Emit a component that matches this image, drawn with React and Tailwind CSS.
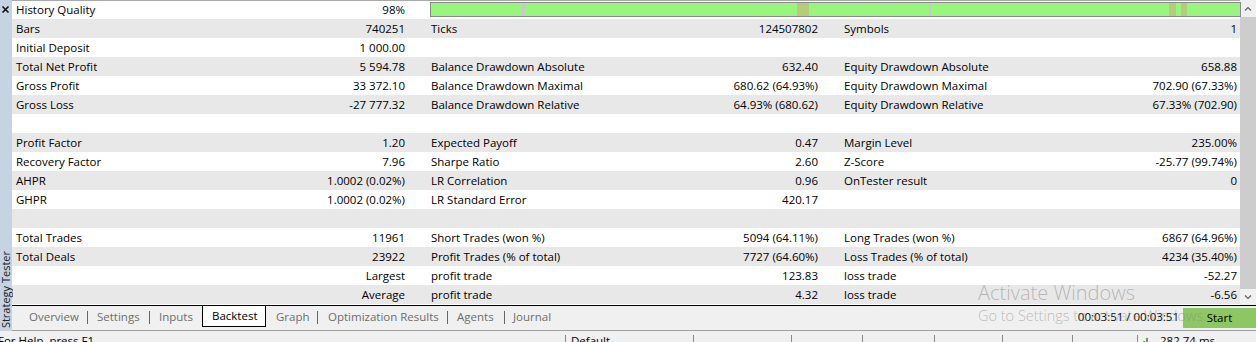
import React from 'react';

const rows = [
    null,
    ['Bars', '740251', 'Ticks', '124507802', 'Symbols', '1'],
    ['Initial Deposit', '1 000.00', '', '', '', ''],
    ['Total Net Profit', '5 594.78', 'Balance Drawdown Absolute', '632.40', 'Equity Drawdown Absolute', '658.88'],
    ['Gross Profit', '33 372.10', 'Balance Drawdown Maximal', '680.62 (64.93%)', 'Equity Drawdown Maximal', '702.90 (67.33%)'],
    ['Gross Loss', '-27 777.32', 'Balance Drawdown Relative', '64.93% (680.62)', 'Equity Drawdown Relative', '67.33% (702.90)'],
    ['', '', '', '', '', ''],
    ['Profit Factor', '1.20', 'Expected Payoff', '0.47', 'Margin Level', '235.00%'],
    ['Recovery Factor', '7.96', 'Sharpe Ratio', '2.60', 'Z-Score', '-25.77 (99.74%)'],
    ['AHPR', '1.0002 (0.02%)', 'LR Correlation', '0.96', 'OnTester result', '0'],
    ['GHPR', '1.0002 (0.02%)', 'LR Standard Error', '420.17', '', ''],
    ['', '', '', '', '', ''],
    ['Total Trades', '11961', 'Short Trades (won %)', '5094 (64.11%)', 'Long Trades (won %)', '6867 (64.96%)'],
    ['Total Deals', '23922', 'Profit Trades (% of total)', '7727 (64.60%)', 'Loss Trades (% of total)', '4234 (35.40%)'],
    ['', 'Largest', 'profit trade', '123.83', 'loss trade', '-52.27'],
    ['', 'Average', 'profit trade', '4.32', 'loss trade', '-6.56'],
];

// marks on the history quality bar, px from bar's left edge
const marks = [
    { left: 91, width: 3, color: '#c9c9c9' },
    { left: 366, width: 12, color: '#b5cd7a' },
    { left: 498, width: 2, color: '#c9c9c9' },
    { left: 738, width: 7, color: '#b5cd7a' },
    { left: 750, width: 6, color: '#b5cd7a' },
];

const statusCells = [
    { w: 565, text: 'For Help, press F1', first: true },
    { w: 128, text: 'Default' },
    { w: 98 }, { w: 71 }, { w: 72 }, { w: 68 }, { w: 70 }, { w: 65 },
];

function Cell({ label, value }) {
    return (
        <div className="flex justify-between whitespace-nowrap">
            <span>{label}</span>
            <span>{value}</span>
        </div>
    );
}

function Sep() {
    return <div className="w-px h-[13px] bg-[#666] mt-[5px] shrink-0" />;
}

export default function App() {
    return (
        <div className="w-[1256px] h-[342px] overflow-hidden bg-white relative text-[11.5px] text-black"
            style={{ fontFamily: '"Open Sans", "Noto Sans", sans-serif' }}>
            <div className="flex h-[331px]">
                {/* left dock strip */}
                <div className="w-[12px] shrink-0 bg-[#c5d3e3] flex flex-col justify-between items-center">
                    <svg width="9" height="9" viewBox="0 0 9 9" className="mt-[5px] -ml-[2px]">
                        <path d="M1.5 1.5 L7.5 7.5 M7.5 1.5 L1.5 7.5" stroke="#111" strokeWidth="1.6" />
                    </svg>
                    <span className="[writing-mode:vertical-rl] rotate-180 text-[11px] leading-[12px] text-[#222] mb-[3px] whitespace-nowrap">Strategy Tester</span>
                </div>

                <div className="flex-1 flex flex-col">
                    <div className="flex h-[305px]">
                        <div className="w-[1228px] border-t border-[#a9a9a9]">
                            {rows.map((r, i) => {
                                const bg = i % 2 === 0 ? 'bg-white' : 'bg-[#e8e8e8]';
                                if (!r) {
                                    return (
                                        <div key={i} className={`h-[18px] ${bg} grid grid-cols-[389px_387px_393px] gap-x-[26px] pl-[4px] leading-[18px]`}>
                                            <Cell label="History Quality" value="98%" />
                                            <div className="col-span-2 relative h-[15px] mt-[1px] -ml-[1px] mr-[-4px] bg-[#98f57e] border border-[#8a8a8a]">
                                                {marks.map((m, k) => (
                                                    <div key={k} className="absolute top-0 bottom-0"
                                                        style={{ left: m.left, width: m.width, background: m.color }} />
                                                ))}
                                            </div>
                                        </div>
                                    );
                                }
                                return (
                                    <div key={i} className={`h-[19px] ${bg} grid grid-cols-[389px_387px_393px] gap-x-[26px] pl-[4px] leading-[19px]`}>
                                        <Cell label={r[0]} value={r[1]} />
                                        <Cell label={r[2]} value={r[3]} />
                                        <Cell label={r[4]} value={r[5]} />
                                    </div>
                                );
                            })}
                        </div>
                        {/* scrollbar */}
                        <div className="w-[16px] bg-[#f0f0f0] flex flex-col items-center justify-between">
                            <svg width="8" height="6" viewBox="0 0 8 6" className="mt-[6px]">
                                <path d="M1 4.5 L4 1.5 L7 4.5" fill="none" stroke="#606060" strokeWidth="1.2" />
                            </svg>
                            <div className="w-[16px] flex-1 my-[5px] bg-[#cdcdcd]" />
                            <svg width="8" height="6" viewBox="0 0 8 6" className="mb-[5px]">
                                <path d="M1 1.5 L4 4.5 L7 1.5" fill="none" stroke="#606060" strokeWidth="1.2" />
                            </svg>
                        </div>
                    </div>

                    {/* tab bar */}
                    <div className="h-[26px] bg-[#f0f0f0] border-t border-black border-b border-b-[#a0a0a0] flex items-start text-[#6e6e6e] relative">
                        <div className="w-[75px] pl-[17px] leading-[22px]">Overview</div>
                        <Sep />
                        <div className="w-[61px] pl-[9px] leading-[22px]">Settings</div>
                        <Sep />
                        <div className="w-[52px] pl-[9px] leading-[22px]">Inputs</div>
                        <div className="w-[64px] h-[21px] bg-white border-x border-b border-black pl-[9px] leading-[20px] text-black">Backtest</div>
                        <div className="w-[51px] pl-[10px] leading-[22px]">Graph</div>
                        <Sep />
                        <div className="w-[129px] pl-[10px] leading-[22px]">Optimization Results</div>
                        <Sep />
                        <div className="w-[56px] pl-[9px] leading-[22px]">Agents</div>
                        <Sep />
                        <div className="pl-[8px] leading-[22px]">Journal</div>
                        <div className="flex-1" />
                        <div className="leading-[22px] text-black mr-[4px]">00:03:51 / 00:03:51</div>
                        <div className="w-[73px] h-[20px] mt-[2px] bg-[#8cc763] text-black text-center leading-[20px]">Start</div>
                    </div>
                </div>
            </div>

            {/* status bar */}
            <div className="h-[11px] bg-[#f0f0f0] flex">
                {statusCells.map((c, i) => (
                    <div key={i} className={`shrink-0 mt-[4px] ${c.first ? '' : 'border-l border-[#8a8a8a]'} leading-[16px] pl-[4px] whitespace-nowrap`}
                        style={{ width: c.w }}>
                        <div className={c.first ? '-ml-[6px] mt-[-2px]' : 'mt-[-2px] pl-[1px]'}>{c.text || ''}</div>
                    </div>
                ))}
                <div className="flex-1 border-l border-[#8a8a8a] mt-[4px] flex items-start pl-[4px]">
                    <svg width="10" height="10" viewBox="0 0 10 10" className="mt-[1px]">
                        <path d="M2 9 V5 M5 9 V2 M8 9 V6" stroke="#3a8a2a" strokeWidth="1.6" />
                    </svg>
                    <span className="ml-[8px] leading-[16px] -mt-[2px]">282.74 ms</span>
                </div>
            </div>

            {/* windows activation watermark */}
            <div className="absolute left-[978px] top-[280px] pointer-events-none text-[rgba(140,140,140,0.55)] font-light">
                <div className="text-[20px] leading-[26px]">Activate Windows</div>
                <div className="text-[14.5px] leading-[18px] mt-[1px]">Go to Settings to activate Windows.</div>
            </div>
        </div>
    );
}
